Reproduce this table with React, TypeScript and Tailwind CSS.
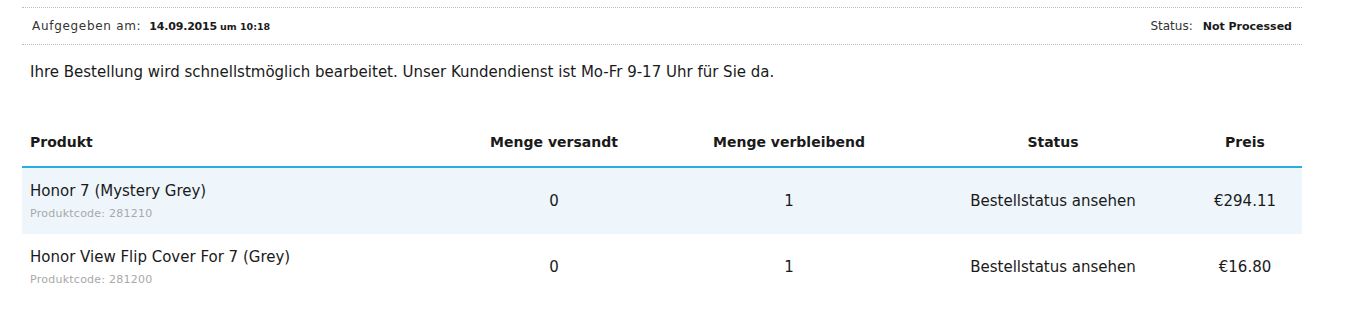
export default function App() {
  const rows = [
    { name: "Honor 7 (Mystery Grey)", code: "281210", sent: "0", left: "1", price: "€294.11", shade: true },
    { name: "Honor View Flip Cover For 7 (Grey)", code: "281200", sent: "0", left: "1", price: "€16.80", shade: false },
  ];
  const cols = "grid grid-cols-[426px_212px_258px_270px_114px]";
  return (
    <div className="w-[1353px] h-[321px] bg-white text-[#1a1a1a] font-['DejaVu_Sans',sans-serif]">
      <div className="ml-[22px] w-[1280px] pt-[7px]">
        <div className="flex items-center justify-between h-[38px] border-y border-dotted border-[#bdbdbd] px-[10px]">
          <div className="flex items-baseline text-[12px]">
            <span className="text-[#333] tracking-[0.7px]">Aufgegeben am:</span>
            <span className="ml-[8px] font-bold text-[11px] tracking-[-0.2px]">14.09.2015</span>
            <span className="ml-[3px] font-bold text-[9.5px]">um 10:18</span>
          </div>
          <div className="flex items-baseline text-[12px]">
            <span className="text-[#333]">Status:</span>
            <span className="ml-[10px] font-bold text-[11px]">Not Processed</span>
          </div>
        </div>
        <p className="mt-[16px] pl-[8px] text-[15px] leading-[22px]">
          Ihre Bestellung wird schnellstmöglich bearbeitet. Unser Kundendienst ist Mo-Fr 9-17 Uhr für Sie da.
        </p>
        <div className="mt-[45px]">
          <div className={`${cols} h-[40px] pt-[4px] text-[14px] font-bold border-b-2 border-[#2aaee2]`}>
            <div className="pl-[8px]">Produkt</div>
            <div className="text-center">Menge versandt</div>
            <div className="text-center">Menge verbleibend</div>
            <div className="text-center">Status</div>
            <div className="text-center">Preis</div>
          </div>
          {rows.map((r) => (
            <div
              key={r.code}
              className={`${cols} h-[66px] items-center text-[15px] ${r.shade ? "bg-[#eef6fc]" : ""}`}
            >
              <div className="pl-[8px]">
                <div className="leading-[20px] -mt-[1px]">{r.name}</div>
                <div className="mt-[6px] text-[11px] tracking-[0.25px] text-[#a8a8a8] leading-[14px]">Produktcode: {r.code}</div>
              </div>
              <div className="text-center">{r.sent}</div>
              <div className="text-center">{r.left}</div>
              <div className="text-center">Bestellstatus ansehen</div>
              <div className="text-center">{r.price}</div>
            </div>
          ))}
        </div>
      </div>
    </div>
  );
}
